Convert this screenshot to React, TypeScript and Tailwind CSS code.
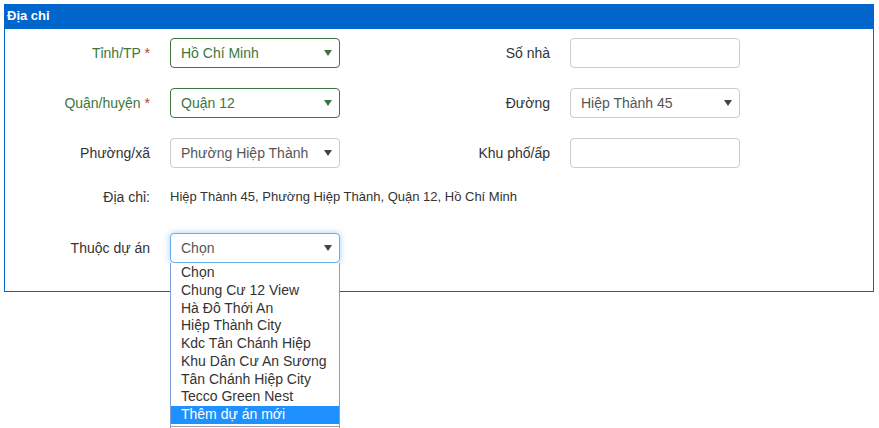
import React from "react";

const projects = [
  "Chọn",
  "Chung Cư 12 View",
  "Hà Đô Thới An",
  "Hiệp Thành City",
  "Kdc Tân Chánh Hiệp",
  "Khu Dân Cư An Sương",
  "Tân Chánh Hiệp City",
  "Tecco Green Nest",
  "Thêm dự án mới",
];

function Caret({ color }: { color: string }) {
  return (
    <svg width="8" height="6" viewBox="0 0 8 6" className="shrink-0">
      <polygon points="0,0 8,0 4,6" fill={color} />
    </svg>
  );
}

function Select({
  value,
  tone = "default",
}: {
  value: string;
  tone?: "default" | "success" | "focus";
}) {
  const box =
    tone === "success"
      ? "border-[#3c763d] text-[#3c763d]"
      : tone === "focus"
      ? "border-[#66afe9] text-[#555] shadow-[0_0_6px_rgba(102,175,233,0.6)]"
      : "border-[#ccc] text-[#555]";
  return (
    <div
      className={`flex h-[30px] w-[170px] items-center justify-between rounded-[4px] border bg-white pl-[10px] pr-[7px] ${box}`}
    >
      <span>{value}</span>
      <Caret color={tone === "success" ? "#3c763d" : "#444"} />
    </div>
  );
}

function Input() {
  return <div className="h-[30px] w-[170px] rounded-[4px] border border-[#ccc] bg-white" />;
}

function Label({ children, success }: { children: React.ReactNode; success?: boolean }) {
  return (
    <div className={`text-right ${success ? "text-[#3c763d]" : "text-[#333]"}`}>{children}</div>
  );
}

export default function App() {
  return (
    <div
      className="h-[428px] overflow-hidden bg-white pt-1 pl-1 text-[14px]"
      style={{ fontFamily: '"Liberation Sans", Arial, sans-serif' }}
    >
      <div className="w-[870px] border border-t-0 border-[#0066cc]">
        <div className="h-[25px] bg-[#0066cc] pl-[2px] pt-[5px] text-[13px] font-bold leading-[14px] text-white">
          Địa chỉ
        </div>
        <div className="grid grid-cols-[145px_170px_190px_170px] grid-rows-[30px_30px_30px_25px_30px] items-center gap-x-5 gap-y-5 pt-[9px] pb-[28px]">
          <Label success>
            Tỉnh/TP <span className="text-[#a94442]">*</span>
          </Label>
          <Select value="Hồ Chí Minh" tone="success" />
          <Label>Số nhà</Label>
          <Input />

          <Label success>
            Quận/huyện <span className="text-[#a94442]">*</span>
          </Label>
          <Select value="Quận 12" tone="success" />
          <Label>Đường</Label>
          <Select value="Hiệp Thành 45" />

          <Label>Phường/xã</Label>
          <Select value="Phường Hiệp Thành" />
          <Label>Khu phố/ấp</Label>
          <Input />

          <div className="self-start text-right leading-[18px] text-[#333]">Địa chỉ:</div>
          <div className="col-span-3 self-start whitespace-nowrap text-[13px] leading-[18px] text-[#333]">
            Hiệp Thành 45, Phường Hiệp Thành, Quận 12, Hồ Chí Minh
          </div>

          <Label>Thuộc dự án</Label>
          <div className="relative">
            <Select value="Chọn" tone="focus" />
            <div className="absolute left-0 top-full z-10 w-[170px] border border-t-0 border-[#7e9fd9] bg-white pb-[12px] pt-[1px]">
              {projects.map((p, i) => (
                <div
                  key={p}
                  className={`h-[17.75px] pl-[10px] leading-[17.75px] ${
                    i === projects.length - 1 ? "bg-[#1e90ff] text-white" : "text-[#333]"
                  }`}
                >
                  {p}
                </div>
              ))}
              <div className="mt-[2px] border-t border-[#a0a0a0]" />
            </div>
          </div>
          <div />
          <div />
        </div>
      </div>
    </div>
  );
}
